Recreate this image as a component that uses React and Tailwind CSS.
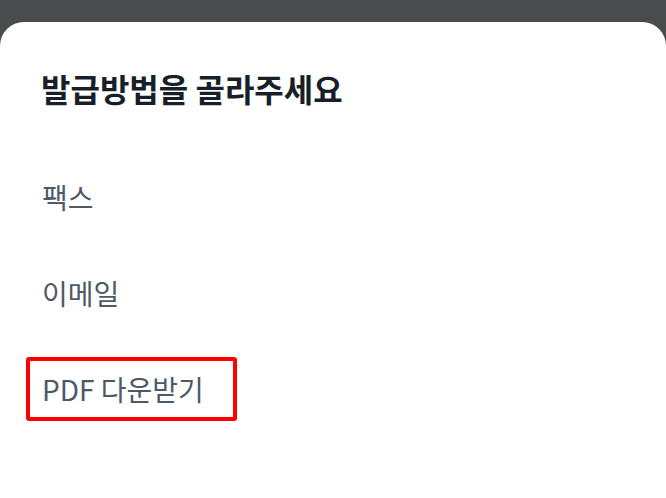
import React from 'react';

const options = ['팩스', '이메일', 'PDF 다운받기'];

const App = () => (
  <div
    className="w-[666px] h-[498px] bg-[#4a4b4d] pt-[22px] overflow-hidden"
    style={{ fontFamily: '"Noto Sans CJK KR", "Noto Sans", sans-serif' }}
  >
    <div className="h-full bg-white rounded-t-[24px] pt-[42px] pl-[26px]">
      <h2 className="pl-[15px] text-[32px] leading-[48px] font-bold text-[#191f28]">
        발급방법을 골라주세요
      </h2>
      <ul className="mt-[53px] flex flex-col gap-[32px]">
        {options.map((label, i) => (
          <li key={label}>
            <button
              className={`h-[64px] px-[12px] border-4 rounded-[3px] text-[28px] leading-[40px] text-[#4e5968] text-left ${
                i === options.length - 1 ? 'border-[#ff0000] w-[211px]' : 'border-transparent'
              }`}
            >
              {label}
            </button>
          </li>
        ))}
      </ul>
    </div>
  </div>
);

export default App;
